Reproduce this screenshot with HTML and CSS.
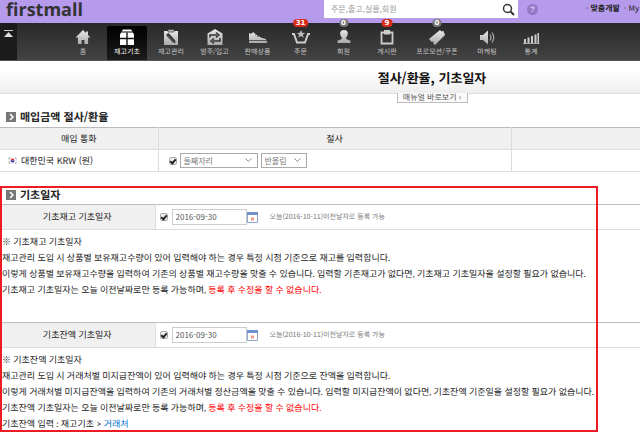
FILE: index.html
```html
<!DOCTYPE html>
<html lang="ko">
<head>
<meta charset="utf-8">
<meta name="viewport" content="width=device-width, initial-scale=1">
<title>절사/환율, 기초일자</title>
<link rel="stylesheet" href="styles.css">
</head>
<body>
<svg class="defs" width="0" height="0" aria-hidden="true">
  <defs>
    <linearGradient id="metal" x1="0" y1="0" x2="0" y2="1"><stop offset="0" stop-color="#e8e8e8"/><stop offset="1" stop-color="#aaa"/></linearGradient>
  </defs>
</svg>
<div class="page">
  <header class="topbar">
    <a class="logo" href="#">firstmall</a>
    <form class="search">
      <input type="text" aria-label="검색" placeholder="주문,출고,실물,회원">
      <button type="button" aria-label="찾기"><svg width="13" height="13" viewBox="0 0 13 13"><circle cx="5.5" cy="5.5" r="4" fill="none" stroke="#333" stroke-width="1.5"/><path d="M8.5 8.5L12 12" stroke="#333" stroke-width="2"/></svg></button>
    </form>
    <a class="help" href="#">?</a>
    <nav class="links"><a href="#"><span>·</span> <b>맞춤개발</b></a><a href="#">· My</a></nav>
  </header>

  <nav class="menu">
    <button class="fold" type="button" aria-label="접기"><svg width="9" height="8" viewBox="0 0 9 8"><path d="M0 .5h9" stroke="#ccc"/><path d="M4.5 2L9 7H0z" fill="#ddd"/></svg></button>
    <ul>
      <li><a href="#"><svg viewBox="0 0 18 17"><path d="M9 1L1.500 8.500h2.400V15h3.700v-4h2.800v4h3.700V8.500h2.400L14 6V2.500h-2V4z" fill="url(#metal)"/></svg>홈</a></li>
      <li class="on"><a href="#"><svg viewBox="0 0 18 17"><path d="M5 .5h8l1.500 2h-11z" fill="#fff"/><path d="M3 3.500h12l1 2V16H2V5.500z" fill="#fff"/><path d="M9 3.500V16M2 9.500h14" stroke="#151515" stroke-width="1.400"/></svg>재고기초</a></li>
      <li><a href="#"><svg viewBox="0 0 18 17"><path d="M2 2h14v14H2z" fill="url(#metal)"/><path d="M6 .500h6v2.500H6z" fill="#bbb" stroke="#444" stroke-width=".7"/><path d="M4.500 5l2.300-.8 6.200 7 .5 3-3-.9-6-6.500z" fill="#333"/><path d="M5.500 6.500l5.500 6" stroke="#999" stroke-width=".6"/></svg>재고관리</a></li>
      <li><a href="#"><svg viewBox="0 0 18 17"><path d="M9 0l7.500 4.500V16h-15V4.500z" fill="url(#metal)"/><path d="M4 8.500V6h7M10 3.500L13 6l-3 2.500M14 9v3H7M8 9.500L5 12l3 2.500" fill="none" stroke="#333" stroke-width="1.500"/></svg>발주/입고</a></li>
      <li><a href="#"><svg class="wide" viewBox="0 0 20 17"><path d="M1 4c2 1 3 1 4-1l5 4 4 2c3 .3 5 1 5 5H1z" fill="url(#metal)"/><path d="M1 11.500h18M7 6.500l1.500-1.200M9 8l1.500-1.300" stroke="#444" stroke-width=".8"/></svg>판매상품</a></li>
      <li><a href="#"><svg class="wide" viewBox="0 0 20 17"><path d="M1 5h2l3 8.500h8L17 5h2" fill="none" stroke="#ccc" stroke-width="2"/><path d="M10 1l1.200 2.700 3 .2-2.300 1.900.8 2.900L10 7.100 7.300 8.700l.8-2.900L5.800 3.900l3-.2z" fill="#bbb"/></svg>주문</a><em>31</em></li>
      <li><a href="#"><svg viewBox="0 0 18 17"><path d="M9 1c5 0 4.500 5 2.200 7.500V10l4.300 1.700V14h-13v-2.300L6.800 10V8.500C4.500 6 4 1 9 1z" fill="url(#metal)"/></svg>회원</a><em class="zero">0</em></li>
      <li><a href="#"><svg viewBox="0 0 18 17"><path d="M3.500 3.500h11v11h-11z" fill="none" stroke="#ccc" stroke-width="1.800"/><path d="M6 1h6v4.500H6z" fill="#ccc"/></svg>게시판</a><em>9</em></li>
      <li><a href="#"><svg viewBox="0 0 18 17"><path d="M1 10L12 1l1.500 1.500 1.800-.7L17 6 7 16l-1.800-1.500.5-2-2 .5z" fill="url(#metal)"/></svg>프로모션/쿠폰</a><em class="zero">0</em></li>
      <li><a href="#"><svg viewBox="0 0 18 17"><path d="M2 6h3l5-4.500v14L5 11H2z" fill="url(#metal)"/><path d="M12 5.500q2 3 0 6M14 3.500q3.500 5 0 10" fill="none" stroke="#aaa" stroke-width="1.200"/></svg>마케팅</a></li>
      <li><a href="#"><svg viewBox="0 0 18 17"><path d="M2 10h2v4H2zM5.500 8.500h2V14h-2zM9 7h2v7H9zM12.500 5.500h2V14h-2zM15.500 4h1.500v10h-1.500z" fill="#ccc"/><path d="M1 14.500h16.500" stroke="#aaa"/></svg>통계</a></li>
    </ul>
  </nav>

  <div class="titlebar"><h1>절사/환율, 기초일자</h1></div>
  <div class="manualbar"><a class="manual" href="#">매뉴얼 바로보기 ›</a></div>

  <main>
    <section>
      <h2><i><svg width="10" height="10" viewBox="0 0 10 10"><path d="M4 2l3 3-3 3" fill="none" stroke="#fff" stroke-width="1.500"/></svg></i>매입금액 절사/환율</h2>
      <table class="currency">
        <colgroup><col class="c1"><col class="c2"><col></colgroup>
        <thead><tr><th>매입 통화</th><th>절사</th><th></th></tr></thead>
        <tbody><tr>
          <td><div class="country"><svg width="9" height="7" viewBox="0 0 9 7"><path d="M0 0h9v7H0z" fill="#f1f1f1"/><path d="M2.500 3.500a2 2 0 0 1 4 0z" fill="#e33"/><path d="M2.500 3.500a2 2 0 0 0 4 0z" fill="#24a"/><path d="M.5 1.800L2 .5M7 .5l1.500 1.300M.5 5.200L2 6.500M7 6.500l1.500-1.300" stroke="#666" stroke-width=".7"/></svg>대한민국 KRW (원)</div></td>
          <td><div class="round">
            <input type="checkbox" aria-label="절사 사용" checked>
            <select class="digit" aria-label="절사 자리"><option>둘째자리</option></select>
            <select class="mode" aria-label="절사 방식"><option>반올림</option></select>
          </div></td>
          <td></td>
        </tr></tbody>
      </table>
    </section>

    <section class="dates">
      <h2><i><svg width="10" height="10" viewBox="0 0 10 10"><path d="M4 2l3 3-3 3" fill="none" stroke="#fff" stroke-width="1.500"/></svg></i>기초일자</h2>
      <table class="base">
        <colgroup><col class="c1"><col></colgroup>
        <tbody><tr><th><label for="stock">기초재고 기초일자</label></th><td><div class="date">
          <input type="checkbox" aria-label="기초재고 사용" checked>
          <input id="stock" type="text" value="2016-09-30">
          <button type="button" aria-label="달력"><svg width="11" height="11" viewBox="0 0 11 11"><path d="M.5 .5h10v10H.5z" fill="#fff" stroke="#8fa5cf"/><path d="M0 0h11v3H0z" fill="#6f91cf"/><path d="M4 5.500h3v3H4z" fill="#ef9a86"/></svg></button>
          <small>오늘(2016-10-11)이전날자로 등록 가능</small>
        </div></td></tr></tbody>
      </table>
      <div class="notes first">
        <p>※ 기초재고 기초일자</p>
        <p>재고관리 도입 시 상품별 보유재고수량이 있어 입력해야 하는 경우 특정 시점 기준으로 재고를 입력합니다.</p>
        <p>이렇게 상품별 보유재고수량을 입력하여 기존의 상품별 재고수량을 맞출 수 있습니다. 입력할 기존재고가 없다면, 기초재고 기초일자을 설정할 필요가 없습니다.</p>
        <p>기초재고 기초일자는 오늘 이전날짜로만 등록 가능하며, <strong>등록 후 수정을 할 수 없습니다.</strong></p>
      </div>
      <table class="base">
        <colgroup><col class="c1"><col></colgroup>
        <tbody><tr><th><label for="balance">기초잔액 기초일자</label></th><td><div class="date">
          <input type="checkbox" aria-label="기초잔액 사용" checked>
          <input id="balance" type="text" value="2016-09-30">
          <button type="button" aria-label="달력"><svg width="11" height="11" viewBox="0 0 11 11"><path d="M.5 .5h10v10H.5z" fill="#fff" stroke="#8fa5cf"/><path d="M0 0h11v3H0z" fill="#6f91cf"/><path d="M4 5.500h3v3H4z" fill="#ef9a86"/></svg></button>
          <small>오늘(2016-10-11)이전날자로 등록 가능</small>
        </div></td></tr></tbody>
      </table>
      <div class="notes">
        <p>※ 기초잔액 기초일자</p>
        <p>재고관리 도입 시 거래처별 미지급잔액이 있어 입력해야 하는 경우 특정 시점 기준으로 잔액을 입력합니다.</p>
        <p>이렇게 거래처별 미지급잔액을 입력하여 기존의 거래처별 정산금액을 맞출 수 있습니다. 입력할 미지급잔액이 없다면, 기초잔액 기준일을 설정할 필요가 없습니다.</p>
        <p>기초잔액 기초일자는 오늘 이전날짜로만 등록 가능하며, <strong>등록 후 수정을 할 수 없습니다.</strong></p>
        <p>기초잔액 입력 : 재고기초 &gt; <a href="#">거래처</a></p>
      </div>
      <div class="highlight"></div>
    </section>
  </main>
</div>
</body>
</html>
```
FILE: styles.css
```css
* { box-sizing: border-box; }
body { margin: 0; background: #fff; color: #222; font: 9px/16px "Noto Sans CJK KR", sans-serif; text-rendering: geometricPrecision; }
a { color: inherit; text-decoration: none; }
h1, h2, p, ul { margin: 0; padding: 0; }
button { border: 0; padding: 0; background: none; display: flex; align-items: center; justify-content: center; }
input, select { font: inherit; }
svg { display: block; }
.defs { position: absolute; }

.topbar { display: flex; align-items: flex-start; height: 23px; background: #b69aeb; }
.logo { flex: none; width: 324px; padding-left: 6px; font: bold 18px/20px "Open Sans", sans-serif; color: #333; }
.search { display: flex; flex: none; width: 194px; height: 18px; background: #fff; }
.search input { flex: 1; min-width: 0; padding: 0 7px; border: 0; background: none; font-size: 8px; }
.search input::placeholder { color: #999; }
.search button { width: 20px; }
.help { flex: none; width: 11px; height: 11px; margin: 4px 0 0 9px; border-radius: 50%; background: #9479c8; color: #ddd0f5; font: bold 8px/11px "Liberation Sans", sans-serif; text-align: center; }
.links { display: flex; gap: 4px; margin-left: 48px; font-size: 8px; line-height: 18px; color: #222; white-space: nowrap; }

.menu { display: flex; height: 38px; background: linear-gradient(#292929, #434343); border-bottom: 1px solid #555; }
.fold { width: 17px; margin-right: 44px; padding-top: 7px; background: #1b1b1b; align-items: flex-start; }
.menu ul { display: grid; grid-template-columns: 44px 44px 44px 43px 43px 43px 43px 44px 56px 44px 44px; list-style: none; }
.menu li { position: relative; }
.menu a { display: flex; flex-direction: column; align-items: center; height: 37px; padding-top: 6px; font-size: 7px; line-height: 12px; color: #c8c8c8; white-space: nowrap; }
.menu li svg { width: 18px; height: 17px; }
.menu li svg.wide { width: 20px; }
.menu .on { margin: 3px 2px 0; border-radius: 2px 2px 0 0; background: linear-gradient(#000, #1c1c1c); }
.menu .on a { height: 34px; padding-top: 3px; color: #fff; }
.menu em { position: absolute; top: -4px; left: 50%; transform: translateX(-50%); min-width: 9px; padding: 0 3px; border-radius: 4px; background: #d92b1c; color: #fff; font: bold 7px/8px "DejaVu Sans", sans-serif; text-align: center; }
.menu em.zero { padding: 0 2px; background: #777; }

.titlebar { height: 33px; padding-left: 35%; border-bottom: 1px solid #ddd; background: linear-gradient(#fff 30%, #eee); text-align: center; }
h1 { font-size: 13px; line-height: 34px; color: #111; }
.manualbar { padding-left: 35%; }
.manual { display: block; width: 71px; height: 10px; margin: -1px auto 0; border: 1px solid #bbb; border-top: 0; background: #fafafa; color: #555; font-size: 8px; line-height: 9px; text-align: center; }

h2 { display: flex; align-items: center; gap: 4px; height: 20px; padding-left: 6px; font-size: 11px; line-height: 20px; color: #222; }
h2 i { width: 10px; height: 10px; background: #777; }
main { padding-top: 4px; }
table { width: 100%; border-collapse: collapse; table-layout: fixed; border-top: 1px solid #bbb; }
th, td { height: 22px; padding: 0; border-bottom: 1px solid #ddd; font-weight: normal; }
th + th, th + td, td + td { border-left: 1px solid #ddd; }
th { background: #f0f0f0; }
.currency .c1 { width: 158px; }
.currency .c2 { width: 353px; }
.base .c1 { width: 155px; }
.base th, .base td { height: 25px; }
.country, .round, .date { display: flex; align-items: center; }
.country { gap: 4px; padding-left: 8px; }
.round { gap: 3px; padding-left: 10px; }
input[type=checkbox] { appearance: none; flex: none; width: 8px; height: 8px; margin: 0; border: 1px solid #aaa; border-radius: 2px; background: #eee; display: grid; place-items: center; }
input[type=checkbox]::after { content: ""; box-sizing: border-box; width: 4px; height: 6px; border: solid #222; border-width: 0 2px 2px 0; transform: rotate(40deg); }
select { appearance: none; height: 15px; padding: 0 3px; border: 1px solid #aaa; border-radius: 0; color: #777; font-size: 8px; line-height: 13px; background: url("data:image/svg+xml,%3Csvg xmlns='http://www.w3.org/2000/svg' width='7' height='5'%3E%3Cpath d='M.5 .5l3 3 3-3' fill='none' stroke='%23888'/%3E%3C/svg%3E") right 5px center no-repeat #fff; }
.digit { width: 78px; }
.mode { width: 46px; }

.dates { position: relative; margin-top: 14px; }
.dates h2 { height: 18px; }
.date { padding-left: 4px; }
.date input[type=text] { width: 75px; height: 16px; margin-left: 4px; padding: 0 3px; border: 1px solid #ccc; color: #555; font-size: 8px; }
.date small { margin-left: 12px; color: #777; font-size: 7px; }
.notes { padding: 4px 2px 0; font-family: Lato, "Noto Sans CJK KR", sans-serif; white-space: nowrap; }
.notes.first { height: 92px; }
.notes strong { font-weight: normal; color: #f00; }
.notes a { color: #0070d0; }
.highlight { position: absolute; top: 0; left: 0; width: 598px; height: 100%; border: 2px solid #ec1c24; pointer-events: none; }
```
